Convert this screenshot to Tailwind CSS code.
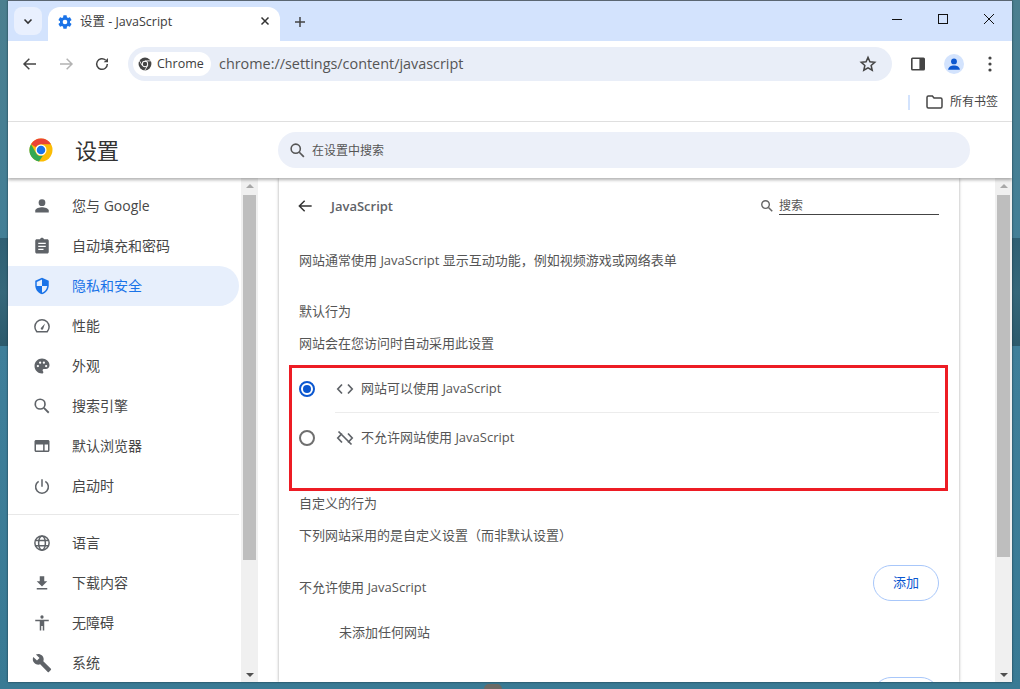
<!DOCTYPE html>
<html lang="zh-CN">
<head>
<meta charset="UTF-8">
<title>设置 - JavaScript</title>
<script src="https://cdn.jsdelivr.net/npm/@tailwindcss/browser@4"></script>
</head>
<body class="relative w-[1020px] h-[689px] overflow-hidden bg-gradient-to-b from-[#4b7f8f] via-[#3f7f9a] to-[#397a94] font-['Open_Sans','Noto_Sans_CJK_SC',sans-serif] text-[13px] text-[#474747]">

<!-- desktop strip behind the window -->
<div class="absolute left-0 top-[238px] w-full h-[108px] bg-gradient-to-b from-[#2f5f73] via-[#35677a] to-[#2c5a6c]"></div>
<div class="absolute left-[484px] top-[684px] w-[18px] h-[10px] rounded-full bg-[#6a6a66]"></div>

<div class="absolute left-[8px] top-0 w-[1004px] h-[681.5px] border-t border-t-[#5a6672] flex flex-col overflow-hidden bg-white shadow-[0_0_2px_#1b3340]">

  <!-- tab strip -->
  <div class="h-[40px] shrink-0 bg-[#d3e3fd] flex items-start">
    <div class="ml-[6px] mt-[6px] w-[28px] h-[28px] rounded-lg bg-[#e9f0fe] flex items-center justify-center">
      <svg width="10" height="7" viewBox="0 0 10 7"><path d="M1.5 1.5 5 5l3.5-3.5" fill="none" stroke="#333" stroke-width="1.6"/></svg>
    </div>
    <div class="ml-[6px] mt-[6px] w-[232px] h-[34px] bg-white rounded-t-xl flex items-center pl-[9px] pr-[9px] pb-[4px] relative">
      <svg width="16" height="16" viewBox="0 0 24 24"><path fill="#1a73e8" d="M19.4 13c.04-.3.1-.65.1-1s-.03-.68-.07-1l2.1-1.65c.2-.15.24-.42.12-.64l-2-3.46c-.12-.22-.4-.3-.6-.22l-2.5 1c-.52-.4-1.08-.73-1.7-.98l-.37-2.65A.5.5 0 0 0 14 2h-4a.5.5 0 0 0-.5.42l-.37 2.65c-.6.25-1.17.6-1.7.98l-2.48-1c-.23-.08-.5 0-.6.22l-2 3.46c-.14.22-.08.5.12.64L4.57 11c-.04.32-.07.65-.07 1s.03.68.07 1l-2.1 1.65c-.2.15-.25.42-.13.64l2 3.46c.12.22.4.3.6.22l2.5-1c.52.4 1.08.73 1.7.98l.37 2.65c.03.24.24.42.49.42h4c.25 0 .46-.18.5-.42l.36-2.65c.6-.25 1.17-.6 1.7-.98l2.48 1c.23.08.5 0 .6-.22l2-3.46c.13-.22.08-.5-.12-.64L19.4 13ZM12 15.5a3.5 3.5 0 1 1 0-7 3.5 3.5 0 0 1 0 7Z"/></svg>
      <span class="ml-[7px] text-[12.5px] text-[#3c3c3c] whitespace-nowrap">设置 - JavaScript</span>
      <svg width="10" height="10" viewBox="0 0 10 10" class="absolute right-[10px] top-[9px]"><path d="M1.5 1.5l7 7m0-7-7 7" stroke="#333" stroke-width="1.5"/></svg>
    </div>
    <svg width="12" height="12" viewBox="0 0 12 12" class="ml-[14px] mt-[15px]"><path d="M6 1v10M1 6h10" stroke="#444" stroke-width="1.5"/></svg>
    <div class="ml-auto flex items-center mt-[12px]">
      <svg width="12" height="12" viewBox="0 0 12 12" class="mr-[34px]"><path d="M1 6.5h10" stroke="#111" stroke-width="1"/></svg>
      <svg width="12" height="12" viewBox="0 0 12 12" class="mr-[34px]"><rect x="1.5" y="1.5" width="9" height="9" fill="none" stroke="#111" stroke-width="1"/></svg>
      <svg width="12" height="12" viewBox="0 0 12 12" class="mr-[17px]"><path d="M1 1l10 10m0-10L1 11" stroke="#111" stroke-width="1"/></svg>
    </div>
  </div>

  <!-- toolbar -->
  <div class="h-[46px] shrink-0 flex items-center bg-white">
    <svg width="16" height="16" viewBox="0 0 24 24" class="ml-[14px]"><path d="M21 12H4m7-8-8 8 8 8" fill="none" stroke="#444" stroke-width="2.2"/></svg>
    <svg width="16" height="16" viewBox="0 0 24 24" class="ml-[20px]"><path d="M3 12h17m-7-8 8 8-8 8" fill="none" stroke="#b3b3b3" stroke-width="2.2"/></svg>
    <svg width="16" height="16" viewBox="0 0 24 24" class="ml-[20px]"><path d="M20 12a8 8 0 1 1-2.6-5.9" fill="none" stroke="#444" stroke-width="2.2"/><path d="M21 3v6.5h-6.5z" fill="#444"/></svg>
    <div class="ml-[18px] w-[764px] h-[34px] rounded-full bg-[#e9eef8] flex items-center pl-[5px]">
      <div class="h-[24px] w-[78px] rounded-full bg-white flex items-center pl-[5px]">
        <svg width="14" height="14" viewBox="0 0 24 24"><circle cx="12" cy="12" r="11" fill="#454545"/><circle cx="12" cy="12" r="5.4" fill="#fff"/><circle cx="12" cy="12" r="3.8" fill="#454545"/><path d="M12 6.6h10M7.3 14.7 2.2 6M16.7 14.7 11.5 23" stroke="#fff" stroke-width="1.4"/></svg>
        <span class="ml-[5px] text-[12.5px] text-[#3c3c3c]">Chrome</span>
      </div>
      <span class="ml-[8px] text-[14.4px] text-[#555]">chrome://settings/content/javascript</span>
      <svg width="18" height="18" viewBox="0 0 24 24" class="ml-auto mr-[15px]"><path d="M12 3.2l2.6 5.9 6.4.6-4.8 4.3 1.4 6.3L12 17l-5.6 3.3 1.4-6.3L3 9.700l6.4-.6z" fill="none" stroke="#444" stroke-width="2"/></svg>
    </div>
    <svg width="16" height="16" viewBox="0 0 16 16" class="ml-[18px]"><rect x="1" y="1.500" width="14" height="13" rx="1.500" fill="#444"/><rect x="2.600" y="3" width="6.800" height="10" fill="#fff"/></svg>
    <div class="ml-[18px] w-[20px] h-[20px] rounded-full bg-[#d3e3fd] flex items-center justify-center">
      <svg width="14" height="14" viewBox="0 0 24 24"><circle cx="12" cy="7.500" r="5" fill="#0b57d0"/><path d="M2 22c0-5 5-7.500 10-7.500S22 17 22 22z" fill="#0b57d0"/></svg>
    </div>
    <svg width="4" height="16" viewBox="0 0 4 16" class="ml-[24px]"><circle cx="2" cy="2" r="1.600" fill="#444"/><circle cx="2" cy="8" r="1.600" fill="#444"/><circle cx="2" cy="14" r="1.600" fill="#444"/></svg>
  </div>

  <!-- bookmarks bar -->
  <div class="h-[35px] shrink-0 flex items-center justify-end border-b border-[#e3e3e3] pr-[14px] pb-[4px]">
    <div class="w-[2px] h-[15px] bg-[#d3e3fd] mr-[16px]"></div>
    <svg width="17" height="14" viewBox="0 0 17 14"><path d="M1 2.500c0-.8.6-1.500 1.400-1.500h4l1.600 2h6.600c.8 0 1.400.6 1.400 1.400v7.100c0 .8-.6 1.500-1.400 1.500H2.400c-.8 0-1.400-.7-1.400-1.500z" fill="none" stroke="#454545" stroke-width="1.500"/></svg>
    <span class="ml-[7px] text-[12px] text-[#444]">所有书签</span>
  </div>

  <!-- settings header -->
  <div class="h-[56px] shrink-0 flex items-center relative z-10 bg-white shadow-[0_2px_3px_rgba(0,0,0,0.3)]">
    <svg width="24" height="24" viewBox="0 0 48 48" class="ml-[21px] shrink-0">
      <circle cx="24" cy="24" r="23" fill="#fbbc04"/>
      <path d="M24 1a23 23 0 0 1 19.900 11.500H24a11.500 11.500 0 0 0-10 5.800L4.100 12.500A23 23 0 0 1 24 1z" fill="#ea4335"/>
      <path d="M4.100 12.500 14 29.800a11.500 11.500 0 0 0 13.800 5.500L20 47A23 23 0 0 1 4.100 12.500z" fill="#34a853"/>
      <circle cx="24" cy="24" r="11" fill="#fff"/><circle cx="24" cy="24" r="8.500" fill="#1a73e8"/>
    </svg>
    <span class="ml-[22px] text-[22px] leading-none text-[#333] whitespace-nowrap shrink-0">设置</span>
    <div class="ml-[159px] w-[692px] h-[36px] shrink-0 rounded-full bg-[#ecf0f9] flex items-center pl-[11px]">
      <svg width="17" height="17" viewBox="0 0 24 24"><circle cx="9.500" cy="9.500" r="6.500" fill="none" stroke="#555" stroke-width="2.200"/><path d="M14.500 14.500 21 21" stroke="#555" stroke-width="2.400"/></svg>
      <span class="ml-[6px] mt-[2px] text-[12px] text-[#555]">在设置中搜索</span>
    </div>
  </div>

  <!-- body -->
  <div class="flex-1 min-h-0 flex bg-[#fafafa]">

    <!-- sidebar -->
    <div class="w-[233px] shrink-0 bg-white overflow-hidden pt-[8px] pr-[2px] text-[14px]">
      <div class="h-[40px] flex items-center pl-[25px]"><svg width="18" height="18" viewBox="0 0 24 24"><circle cx="12" cy="7.500" r="4.500" fill="#5f6368"/><path d="M3 20.500V18c0-3 6-4.500 9-4.500s9 1.500 9 4.500v2.500z" fill="#5f6368"/></svg><span class="ml-[21px] -mt-[2px]">您与 Google</span></div>
      <div class="h-[40px] flex items-center pl-[25px]"><svg width="18" height="18" viewBox="0 0 24 24"><path fill="#5f6368" d="M19 3h-4.200C14.400 1.800 13.300 1 12 1s-2.400.8-2.800 2H5c-1.100 0-2 .9-2 2v15c0 1.100.9 2 2 2h14c1.100 0 2-.9 2-2V5c0-1.100-.9-2-2-2Z"/><path d="M7 8.500h10M7 12.500h10M7 16.500h7" stroke="#fff" stroke-width="1.800"/></svg><span class="ml-[21px] -mt-[2px]">自动填充和密码</span></div>
      <div class="h-[40px] w-[231px] flex items-center pl-[25px] bg-[#e7effc] rounded-r-full"><svg width="18" height="18" viewBox="0 0 24 24"><path fill="#1a73e8" d="M12 1 3 5v6c0 5.600 3.800 10.700 9 12 5.200-1.300 9-6.400 9-12V5z"/><path fill="#e7effc" d="M12 3.200V12H5v-5.500zM12 12h7c-.500 4.100-3.300 7.800-7 8.900z"/></svg><span class="ml-[21px] -mt-[2px] text-[#1a73e8]">隐私和安全</span></div>
      <div class="h-[40px] flex items-center pl-[25px]"><svg width="18" height="18" viewBox="0 0 24 24"><path d="M4.500 19.500h15M5 19.500a9.500 9.500 0 1 1 14 0" fill="none" stroke="#5f6368" stroke-width="2"/><path d="M10.500 14.500 16 8.500l-2.500 7.500a1.600 1.600 0 0 1-3-1.500z" fill="#5f6368"/></svg><span class="ml-[21px] -mt-[2px]">性能</span></div>
      <div class="h-[40px] flex items-center pl-[25px]"><svg width="18" height="18" viewBox="0 0 24 24"><path fill="#5f6368" d="M12 2C6.500 2 2 6.500 2 12s4.500 10 10 10c1 0 1.800-.8 1.800-1.800 0-.5-.2-.9-.5-1.200-.3-.3-.5-.7-.5-1.200 0-1 .8-1.800 1.800-1.800H17c2.800 0 5-2.200 5-5C22 5.900 17.500 2 12 2Z"/><circle cx="6.500" cy="12" r="1.500" fill="#fff"/><circle cx="9.500" cy="7.500" r="1.500" fill="#fff"/><circle cx="14.500" cy="7.500" r="1.500" fill="#fff"/><circle cx="17.500" cy="12" r="1.500" fill="#fff"/></svg><span class="ml-[21px] -mt-[2px]">外观</span></div>
      <div class="h-[40px] flex items-center pl-[25px]"><svg width="18" height="18" viewBox="0 0 24 24"><circle cx="9.500" cy="9.500" r="6.500" fill="none" stroke="#5f6368" stroke-width="2.200"/><path d="M14.500 14.500 21 21" stroke="#5f6368" stroke-width="2.400"/></svg><span class="ml-[21px] -mt-[2px]">搜索引擎</span></div>
      <div class="h-[40px] flex items-center pl-[25px]"><svg width="18" height="18" viewBox="0 0 24 24"><path fill="#5f6368" d="M4 4h16c1.100 0 2 .9 2 2v12c0 1.100-.9 2-2 2H4c-1.100 0-2-.9-2-2V6c0-1.100.9-2 2-2Z"/><path fill="#fff" d="M4 10h9.500v8H4zM15.500 10H20v8h-4.500z"/></svg><span class="ml-[21px] -mt-[2px]">默认浏览器</span></div>
      <div class="h-[40px] flex items-center pl-[25px]"><svg width="18" height="18" viewBox="0 0 24 24"><path d="M12 3v10M7.500 5.800a8.500 8.500 0 1 0 9 0" fill="none" stroke="#5f6368" stroke-width="2"/></svg><span class="ml-[21px] -mt-[2px]">启动时</span></div>
      <div class="mt-[8px] h-[1px] bg-[#e8e8e8]"></div>
      <div class="h-[40px] mt-[8px] flex items-center pl-[25px]"><svg width="18" height="18" viewBox="0 0 24 24"><circle cx="12" cy="12" r="9.500" fill="none" stroke="#5f6368" stroke-width="2"/><ellipse cx="12" cy="12" rx="4.500" ry="9.500" fill="none" stroke="#5f6368" stroke-width="2"/><path d="M3 8.500h18M3 15.500h18" stroke="#5f6368" stroke-width="2"/></svg><span class="ml-[21px] -mt-[2px]">语言</span></div>
      <div class="h-[40px] flex items-center pl-[25px]"><svg width="18" height="18" viewBox="0 0 24 24"><path fill="#5f6368" d="M19 9.500h-4V3H9v6.500H5l7 7zM5 18.500v2h14v-2z"/></svg><span class="ml-[21px] -mt-[2px]">下载内容</span></div>
      <div class="h-[40px] flex items-center pl-[25px]"><svg width="18" height="18" viewBox="0 0 24 24"><circle cx="12" cy="4" r="2.200" fill="#5f6368"/><path fill="#5f6368" d="M3 7.500h18v2h-6V22h-2v-6h-2v6H9V9.500H3z"/></svg><span class="ml-[21px] -mt-[2px]">无障碍</span></div>
      <div class="h-[40px] flex items-center pl-[25px]"><svg width="20" height="20" viewBox="0 0 24 24" class="-ml-[1px]"><path fill="#5f6368" d="M22.700 19 13.600 9.900c.9-2.300.4-5-1.500-6.900-2-2-5-2.400-7.400-1.300L9 6 6 9 1.600 4.700C.4 7.100.9 10.100 2.900 12.100c1.900 1.900 4.600 2.400 6.900 1.500l9.100 9.100c.4.400 1 .4 1.400 0l2.300-2.300c.5-.4.500-1.100.1-1.400Z"/></svg><span class="ml-[20px] -mt-[2px]">系统</span></div>
    </div>

    <!-- sidebar scrollbar -->
    <div class="w-[17px] shrink-0 bg-[#f0f0f0] flex flex-col items-center relative">
      <div class="mt-[6px] w-0 h-0 border-x-[4px] border-x-transparent border-b-[4px] border-b-[#a8a8a8]"></div>
      <div class="mt-[7px] w-[13px] h-[365px] bg-[#bebebe]"></div>
      <div class="absolute bottom-[5px] w-0 h-0 border-x-[4px] border-x-transparent border-t-[4px] border-t-[#505050]"></div>
    </div>

    <!-- content column -->
    <div class="flex-1 min-w-0 pl-[21px] bg-white">
      <div class="w-[680px] h-full bg-white shadow-[0_0_3px_rgba(0,0,0,0.35)] pl-[20px] pr-[20px] overflow-hidden">

        <div class="h-[56px] flex items-center">
          <svg width="16" height="16" viewBox="0 0 24 24" class="-ml-[2px]"><path d="M22 12H4m7.500-8L3.500 12l8 8" fill="none" stroke="#333" stroke-width="2.200"/></svg>
          <span class="ml-[18px] mt-[2px] text-[13px] font-semibold text-[#5f6368]">JavaScript</span>
          <svg width="14" height="14" viewBox="0 0 24 24" class="ml-auto mr-[5px]"><circle cx="9.500" cy="9.500" r="6.500" fill="none" stroke="#666" stroke-width="2.400"/><path d="M14.500 14.500 21 21" stroke="#666" stroke-width="2.600"/></svg>
          <div class="w-[160px] h-[17px] border-b border-[#444] text-[12px] leading-[15px] text-[#555] mt-[1px]">搜索</div>
        </div>

        <div class="mt-[16px] h-[20px] leading-[20px] text-[#555] whitespace-nowrap">网站通常使用 JavaScript 显示互动功能，例如视频游戏或网络表单</div>
        <div class="mt-[31px] h-[20px] leading-[20px] text-[#555]">默认行为</div>
        <div class="mt-[12px] h-[20px] leading-[20px] text-[#555]">网站会在您访问时自动采用此设置</div>

        <!-- radio group with red highlight box -->
        <div class="relative mt-[12px] h-[126px]">
          <div class="absolute -left-[10px] -right-[9px] top-0 bottom-0 border-[3px] border-[#ed1c24]"></div>
          <div class="h-[47px] flex items-center">
            <div class="w-[16px] h-[16px] rounded-full border-[2px] border-[#0b57d0] flex items-center justify-center"><div class="w-[8px] h-[8px] rounded-full bg-[#0b57d0]"></div></div>
            <svg width="18" height="14" viewBox="0 0 18 14" class="ml-[21px]"><path d="M6 2.500 1.800 7 6 11.500M12 2.500 16.200 7 12 11.500" fill="none" stroke="#5f6368" stroke-width="1.700"/></svg>
            <span class="ml-[7px] text-[#555]">网站可以使用 JavaScript</span>
          </div>
          <div class="ml-[36px] h-[1px] bg-[#ececec]"></div>
          <div class="h-[49px] flex items-center">
            <div class="w-[16px] h-[16px] rounded-full border-[2px] border-[#6f6f6f]"></div>
            <svg width="18" height="16" viewBox="0 0 18 16" class="ml-[21px]"><path d="M6 3.500 1.800 8 6 12.500M12 3.500 16.200 8 12 12.500M2.500 1.500l13 13" fill="none" stroke="#5f6368" stroke-width="1.700"/></svg>
            <span class="ml-[7px] text-[#555]">不允许网站使用 JavaScript</span>
          </div>
        </div>

        <div class="mt-[2px] h-[20px] leading-[20px] text-[#555]">自定义的行为</div>
        <div class="mt-[12px] h-[20px] leading-[20px] text-[#555]">下列网站采用的是自定义设置（而非默认设置）</div>

        <div class="mt-[19px] h-[38px] flex items-center justify-between">
          <span class="text-[#555] mt-[10px]">不允许使用 JavaScript</span>
          <div class="w-[66px] h-[36px] rounded-full border border-[#a8c7fa] flex items-center justify-center text-[#0b57d0]">添加</div>
        </div>
        <div class="mt-[20px] ml-[40px] h-[20px] leading-[20px] text-[#555]">未添加任何网站</div>
        <div class="mt-[35px] ml-[574px] w-[66px] h-[36px] rounded-full border border-[#a8c7fa]"></div>
      </div>
    </div>

    <!-- content scrollbar -->
    <div class="w-[17px] shrink-0 ml-auto bg-[#f0f0f0] flex flex-col items-center relative">
      <div class="mt-[6px] w-0 h-0 border-x-[4px] border-x-transparent border-b-[4px] border-b-[#a8a8a8]"></div>
      <div class="mt-[7px] w-[13px] h-[362px] bg-[#bebebe]"></div>
      <div class="absolute bottom-[5px] w-0 h-0 border-x-[4px] border-x-transparent border-t-[4px] border-t-[#505050]"></div>
    </div>
  </div>
</div>
</body>
</html>
